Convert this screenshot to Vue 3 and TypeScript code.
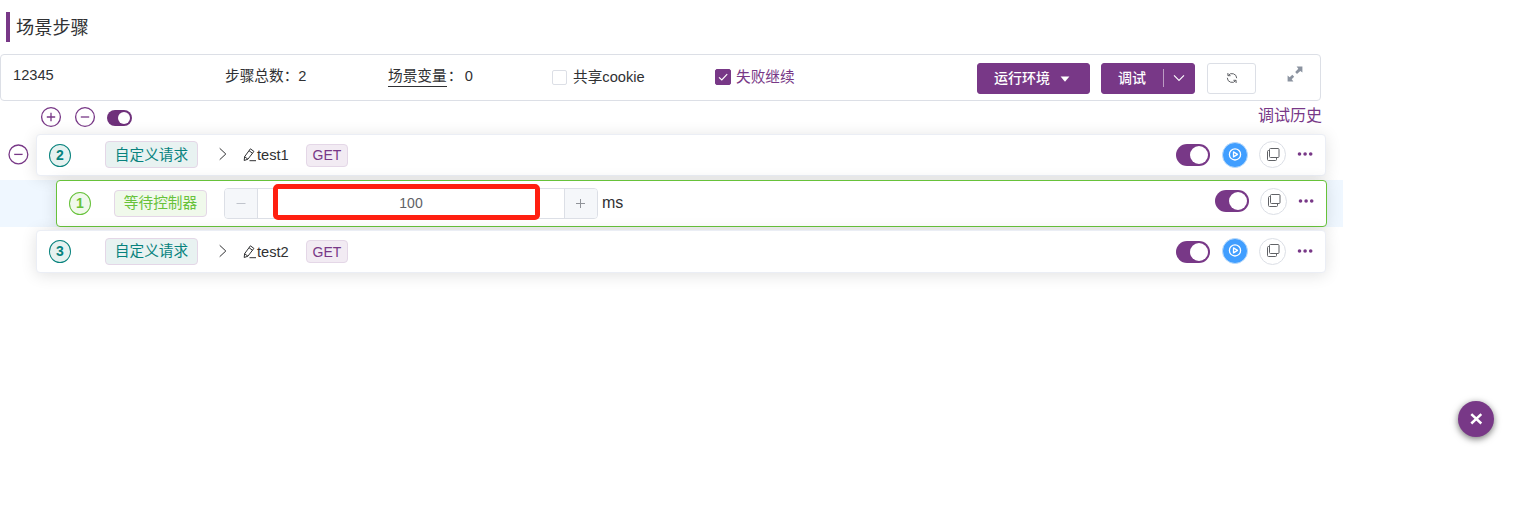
<script setup lang="ts">
import { ref } from 'vue'

interface RequestStep {
  index: number
  name: string
  method: string
  collapsible: boolean
}

const first = ref<RequestStep>({ index: 2, name: 'test1', method: 'GET', collapsible: true })
const last = ref<RequestStep>({ index: 3, name: 'test2', method: 'GET', collapsible: false })
const rows = [first.value, null, last.value]
const wait = ref(100)
</script>

<template>
  <div class="page">
    <h1 class="title"><span>场景步骤</span></h1>

    <section class="panel">
      <div class="cell name">12345</div>
      <div class="cell total">步骤总数：2</div>
      <div class="cell vars"><span class="link">场景变量</span><span class="colon">：</span>0</div>
      <label class="cell cookie"><i class="box"></i>共享cookie</label>
      <label class="cell keep">
        <i class="box on">
          <svg width="14" height="14" viewBox="0 0 14 14"><path d="M3 7.4 L5.8 10 L11.2 4.2" fill="none" stroke="#fff" stroke-width="1.2" /></svg>
        </i>失败继续
      </label>
      <button class="btn env">
        <span>运行环境</span>
        <svg width="10" height="6" viewBox="0 0 10 6"><path d="M0.6 0.5H9.4L5 5.8Z" fill="#fff" /></svg>
      </button>
      <button class="btn debug">
        <span>调试</span><i class="split"></i>
        <svg width="12" height="8" viewBox="0 0 12 8"><path d="M1 1.4 L6 6.4 L11 1.4" fill="none" stroke="#fff" stroke-width="1.1" /></svg>
      </button>
      <button class="btn refresh">
        <svg width="12" height="12" viewBox="0 0 12 12" fill="none" stroke="#606266" stroke-width="1">
          <path d="M1.9 1V3.7H4.6M2.2 3.5A4.7 4.7 0 0 1 10.7 6.2M10.1 11V8.3H7.4M9.8 8.5A4.7 4.7 0 0 1 1.3 5.8" />
        </svg>
      </button>
      <svg class="expand" width="16" height="16" viewBox="0 0 16 16" fill="#8b93a0">
        <path d="M9.6 0.6H15.4V6.4L13.3 4.9L10 7.9L8.2 6.1L11.3 2.8ZM6.4 15.4H0.6V9.6L2.7 11.2L5.3 8.8L7.2 10.7L4.7 13.2Z" />
      </svg>
    </section>

    <div class="tools">
      <svg class="sign" width="22" height="22" viewBox="0 0 22 22"><circle cx="11" cy="11" r="9.4" /><path d="M6.8 11H15.2M11 6.8V15.2" /></svg>
      <svg class="sign" width="22" height="22" viewBox="0 0 22 22"><circle cx="11" cy="11" r="9.4" /><path d="M6.8 11H15.2" /></svg>
      <i class="switch small"></i>
      <a class="history">调试历史</a>
    </div>

    <div class="tree">
      <template v-for="(row, i) in rows" :key="i">
        <div v-if="row" class="line" :class="{ bottom: !row.collapsible }">
          <div class="fold">
            <svg v-if="row.collapsible" class="sign" width="22" height="22" viewBox="0 0 22 22"><circle cx="11.4" cy="11.4" r="9.4" /><path d="M7.2 11.4H15.6" /></svg>
          </div>
          <div class="card">
            <b class="num">{{ row.index }}</b>
            <span class="tag kind">自定义请求</span>
            <svg class="chev" width="10" height="14" viewBox="0 0 10 14"><path d="M1.7 1.3 L7.8 7 L1.7 12.7" fill="none" stroke="#303133" stroke-width="1" /></svg>
            <svg class="edit" width="14" height="14" viewBox="0 0 14 14" fill="none" stroke="#303133" stroke-width="1">
              <path d="M1.2 12.5L1.6 8.7L7.4 0.8L10.9 3.4L4.9 11.2ZM6 2.7L9.5 5.3M1.6 8.7L4.9 11.2M6.5 12.7H13" />
            </svg>
            <span class="label">{{ row.name }}</span>
            <span class="tag method">{{ row.method }}</span>
            <span class="grow"></span>
            <i class="switch"></i>
            <span class="round play">
              <svg width="14" height="14" viewBox="0 0 14 14" fill="none" stroke="#fff" stroke-width="1.3"><circle cx="7" cy="6.4" r="5.6" /><path d="M5.5 3.9L9.5 6.4L5.5 8.9Z" stroke-linejoin="round" /></svg>
            </span>
            <span class="round copy">
              <svg width="14" height="14" viewBox="0 0 14 14" fill="none" stroke="#606266" stroke-width="1"><rect x="3.5" y="0.5" width="9.5" height="9" rx="1" /><path d="M3.5 2.5H2.5Q1.5 2.5 1.5 3.5V11.5Q1.5 12.5 2.5 12.5H9.5Q10.5 12.5 10.5 11.5V9.5" /></svg>
            </span>
            <svg class="more" width="16" height="4" viewBox="0 0 16 4"><circle cx="2.5" cy="2" r="1.8" /><circle cx="8.1" cy="2" r="1.8" /><circle cx="13.7" cy="2" r="1.8" /></svg>
          </div>
        </div>

        <div v-else class="band">
          <div class="card wait">
            <b class="num">1</b>
            <span class="tag kind">等待控制器</span>
            <div class="stepper">
              <span class="side dec"><svg width="10" height="10" viewBox="0 0 10 10"><path d="M0.5 4.5H9.5" stroke="#c0c4cc" /></svg></span>
              <span class="value">{{ wait }}</span>
              <span class="side inc"><svg width="10" height="10" viewBox="0 0 10 10"><path d="M0 4.5H9M4.5 0V9" stroke="#909399" /></svg></span>
              <i class="mark"></i>
            </div>
            <span class="unit">ms</span>
            <span class="grow"></span>
            <i class="switch"></i>
            <span class="round copy">
              <svg width="14" height="14" viewBox="0 0 14 14" fill="none" stroke="#606266" stroke-width="1"><rect x="3.5" y="0.5" width="9.5" height="9" rx="1" /><path d="M3.5 2.5H2.5Q1.5 2.5 1.5 3.5V11.5Q1.5 12.5 2.5 12.5H9.5Q10.5 12.5 10.5 11.5V9.5" /></svg>
            </span>
            <svg class="more" width="16" height="4" viewBox="0 0 16 4"><circle cx="2.5" cy="2" r="1.8" /><circle cx="8.1" cy="2" r="1.8" /><circle cx="13.7" cy="2" r="1.8" /></svg>
          </div>
        </div>
      </template>
    </div>

    <button class="float">
      <svg width="14" height="14" viewBox="0 0 14 14"><path d="M2.3 2.1L12.3 11.5M12.3 2.1L2.3 11.5" stroke="#fff" stroke-width="2.5" /></svg>
    </button>
  </div>
</template>

<style>
body {
  background: #fff;
  overflow: hidden;
}
</style>

<style scoped>
* {
  box-sizing: border-box;
}
.page {
  position: relative;
  width: 1533px;
  height: 505px;
  padding-top: 12px;
  font: 14.67px/20px "Liberation Sans", "Noto Sans CJK SC", sans-serif;
  color: #303133;
}
.title {
  margin: 0 0 12px 6px;
  height: 30px;
  padding-left: 6px;
  border-left: 4px solid #783887;
  font-size: 18.2px;
  font-weight: 400;
  line-height: 33px;
}
.panel {
  display: flex;
  align-items: flex-start;
  width: 1321px;
  height: 47px;
  padding: 8px 0 0 12px;
  border: 1px solid #dcdfe6;
  border-radius: 4px;
}
.cell {
  display: flex;
  flex: none;
  align-items: center;
  height: 20px;
  margin-top: 3px;
  white-space: nowrap;
}
.name { width: 212px; margin-top: 2px; }
.total { width: 163px; }
.vars { width: 164px; }
.link { height: 21px; margin-bottom: -1px; border-bottom: 1px solid #303133; }
.colon { width: 18px; padding-left: 1px; }
.cookie { width: 163px; margin-top: 4px; }
.keep { width: 262px; margin-top: 4px; color: #783887; }
.box {
  width: 15px;
  height: 15px;
  margin-right: 6px;
  border: 1px solid #dcdfe6;
  border-radius: 2px;
}
.box.on {
  width: 16px;
  height: 16px;
  margin-right: 5px;
  display: flex;
  align-items: center;
  justify-content: center;
  background: #783887;
  border-color: #783887;
}
.box.on svg { flex: none; }
.btn {
  display: flex;
  flex: none;
  align-items: center;
  height: 31px;
  padding: 0;
  border: 1px solid #783887;
  border-radius: 3px;
  background: #783887;
  color: #fff;
  font: 500 14px/20px "Liberation Sans", "Noto Sans CJK SC", sans-serif;
}
.btn span { margin-top: -2px; }
.env { width: 113px; padding-left: 16px; gap: 10px; }
.debug { width: 94px; margin-left: 11px; padding-left: 16px; }
.split { width: 1px; height: 18px; margin: -1px 9px 0 17px; background: rgba(255, 255, 255, 0.5); }
.debug svg { margin-top: -2px; }
.refresh {
  justify-content: center;
  width: 49px;
  margin-left: 12px;
  padding-bottom: 1px;
  background: #fff;
  border-color: #dcdfe6;
}
.expand { margin: 3px 0 0 31px; }
.tools {
  display: flex;
  align-items: center;
  width: 1322px;
  height: 33px;
  padding-left: 40px;
}
.tools .sign { margin-top: -1px; }
.sign {
  flex: none;
  margin-right: 12px;
  fill: none;
  stroke: #783887;
  stroke-width: 1.3;
}
.history {
  margin: -3px 0 0 auto;
  font-size: 16px;
  color: #783887;
}
.switch {
  flex: none;
  display: flex;
  justify-content: flex-end;
  width: 34px;
  height: 22px;
  padding: 2px;
  border-radius: 11px;
  background: #783887;
}
.switch::after {
  content: "";
  width: 18px;
  height: 18px;
  border-radius: 50%;
  background: #fff;
}
.switch.small { width: 25px; height: 16px; margin-left: -1px; background: #6f317b; }
.switch.small::after { width: 12px; height: 12px; }
.line { display: flex; height: 42px; margin-bottom: 4px; }
.line.bottom { height: 43px; margin-top: 3px; }
.fold { flex: none; width: 36px; padding: 9px 0 0 7px; }
.card {
  display: flex;
  align-items: center;
  width: 1290px;
  padding: 0 12px;
  border: 1px solid #ebeef5;
  border-radius: 4px;
  background: #fff;
  box-shadow: 0 2px 16px rgba(0, 0, 0, 0.12);
}
.num {
  width: 22px;
  height: 23px;
  border: 1px solid #07827d;
  border-radius: 50%;
  background: #e6f2f0;
  color: #07827d;
  font-size: 14px;
  line-height: 21px;
  text-align: center;
}
.tag {
  border: 1px solid #e4d7e7;
  border-radius: 4px;
  text-align: center;
  white-space: nowrap;
}
.kind {
  width: 93px;
  height: 27px;
  margin: -1px 0 0 34px;
  background: #e8f2f1;
  color: #07827d;
  line-height: 26px;
}
.bottom .kind { line-height: 25px; }
.chev { margin: -2px 0 0 20px; }
.edit { margin-left: 15px; }
.label { width: 49px; }
.method {
  width: 42px;
  height: 23px;
  background: #f2ebf3;
  color: #783887;
  font-size: 14px;
  line-height: 21px;
}
.bottom .method { line-height: 22px; }
.grow { flex: 1; }
.round {
  display: flex;
  flex: none;
  align-items: center;
  justify-content: center;
  width: 27px;
  height: 27px;
  margin: -1px 0 0 11px;
  border: 1px solid #dcdfe6;
  border-radius: 50%;
}
.play { width: 26px; height: 26px; margin-left: 12px; border-color: #b9dafb; background: #409eff; }
.more { margin: -2px 0 0 11px; fill: #783887; }
.band {
  display: flex;
  width: 1343px;
  height: 47px;
  padding-left: 56px;
  background: rgba(64, 158, 255, 0.085);
}
.wait { width: 1271px; padding: 0 12px 0 11px; border-color: #67c23a; }
.wait .num { margin-left: 1px; border-color: #67c23a; background: #f0f9eb; color: #67c23a; }
.wait .kind { margin-left: 23px; background: #f0f9eb; color: #67c23a; line-height: 24px; }
.stepper {
  position: relative;
  display: flex;
  width: 374px;
  height: 31px;
  margin-left: 17px;
  border: 1px solid #dcdfe6;
  border-radius: 4px;
  font-size: 14px;
  line-height: 29px;
  color: #606266;
}
.side { display: flex; align-items: center; justify-content: center; width: 33px; background: #f5f7fa; }
.dec { border-right: 1px solid #dcdfe6; border-radius: 3px 0 0 3px; }
.inc { border-left: 1px solid #dcdfe6; border-radius: 0 3px 3px 0; }
.value { flex: 1; text-align: center; }
.mark {
  position: absolute;
  left: 48px;
  top: -5px;
  width: 267px;
  height: 36px;
  border: 5px solid #ff1f10;
  border-radius: 5px;
}
.unit { margin: -1px 0 0 4px; font-size: 16px; }
.wait .switch { margin-top: -5px; }
.wait .round { margin-top: -5px; }
.wait .more { margin-top: -6px; }
.float {
  position: absolute;
  left: 1458px;
  top: 401px;
  display: flex;
  align-items: center;
  justify-content: center;
  width: 36px;
  height: 36px;
  padding: 0;
  border: 0;
  border-radius: 50%;
  background: #783887;
  box-shadow: 0 2px 7px rgba(0, 0, 0, 0.55);
}
</style>
